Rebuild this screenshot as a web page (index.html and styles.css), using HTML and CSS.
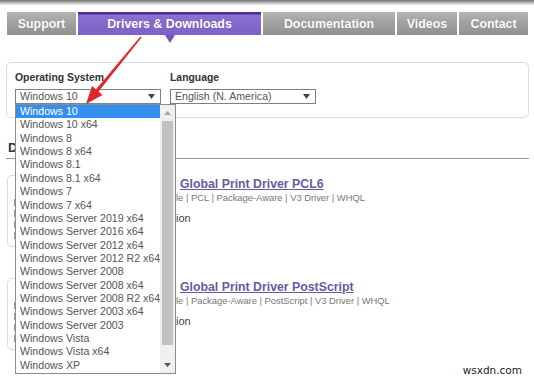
FILE: index.html
```html
<!DOCTYPE html>
<html>
<head>
<meta charset="utf-8">
<link rel="stylesheet" href="styles.css">
</head>
<body>
<div class="topbar"></div>
<nav class="tabs">
  <a class="tab t-support">Support</a>
  <a class="tab active t-drivers">Drivers &amp; Downloads</a>
  <a class="tab t-docs">Documentation</a>
  <a class="tab t-videos">Videos</a>
  <a class="tab t-contact">Contact</a>
</nav>
<section class="filters">
  <div class="field">
    <label class="label">Operating System</label>
    <div class="select-wrap">
      <div class="select focused"><span>Windows 10</span><svg class="caret" viewBox="0 0 7 5"><path d="M0 0H7L3.5 5Z"/></svg></div>
      <div class="dropdown">
        <ul class="options">
          <li class="selected">Windows 10</li>
          <li>Windows 10 x64</li>
          <li>Windows 8</li>
          <li>Windows 8 x64</li>
          <li>Windows 8.1</li>
          <li>Windows 8.1 x64</li>
          <li>Windows 7</li>
          <li>Windows 7 x64</li>
          <li>Windows Server 2019 x64</li>
          <li>Windows Server 2016 x64</li>
          <li>Windows Server 2012 x64</li>
          <li>Windows Server 2012 R2 x64</li>
          <li>Windows Server 2008</li>
          <li>Windows Server 2008 x64</li>
          <li>Windows Server 2008 R2 x64</li>
          <li>Windows Server 2003 x64</li>
          <li>Windows Server 2003</li>
          <li>Windows Vista</li>
          <li>Windows Vista x64</li>
          <li>Windows XP</li>
        </ul>
        <div class="scrollbar">
          <div class="sb-btn"><svg viewBox="0 0 7 4"><path d="M0 4H7L3.5 0Z"/></svg></div>
          <div class="sb-thumb"></div>
          <div class="sb-fill"></div>
          <div class="sb-btn"><svg viewBox="0 0 7 4"><path d="M0 0H7L3.5 4Z"/></svg></div>
        </div>
      </div>
    </div>
  </div>
  <div class="field">
    <label class="label">Language</label>
    <div class="select"><span>English (N. America)</span><svg class="caret" viewBox="0 0 7 5"><path d="M0 0H7L3.5 5Z"/></svg></div>
  </div>
</section>
<h2 class="heading">Drivers</h2>
<div class="results">
  <div class="card">
    <div class="thumb">
      <span class="mark"></span><span class="mark"></span><span class="mark"></span><span class="mark"></span>
    </div>
    <div class="info">
      <a class="title">Global Print Driver PCL6</a>
      <div class="tags">le | PCL | Package-Aware | V3 Driver | WHQL</div>
      <div class="desc">ion</div>
    </div>
  </div>
  <div class="card">
    <div class="thumb">
      <span class="mark"></span><span class="mark"></span><span class="mark"></span><span class="mark"></span>
    </div>
    <div class="info">
      <a class="title">Global Print Driver PostScript</a>
      <div class="tags">le | Package-Aware | PostScript | V3 Driver | WHQL</div>
      <div class="desc">ion</div>
    </div>
  </div>
</div>
<svg class="pointer" viewBox="0 0 534 380">
  <polygon points="141.6,37.4 140.4,36.6 94.6,91 97.4,93" />
  <polygon points="86,104 102.5,95 92,86" />
</svg>
<div class="watermark">wsxdn.com</div>
</body>
</html>
```

FILE: styles.css
```css
* { box-sizing: border-box; }
html, body { margin: 0; padding: 0; }
body {
  font-family: "Liberation Sans", Arial, sans-serif;
  background: #fff;
  width: 534px;
  height: 380px;
  overflow: hidden;
  position: relative;
  color: #444;
}
.topbar {
  height: 6px;
  background: linear-gradient(#707070, #a8a8a8 35%, #e8e8e8 75%, #fff);
}
.tabs {
  display: flex;
  gap: 2px;
  margin: 6px 0 0 7px;
  height: 23px;
}
.tab {
  display: flex;
  align-items: center;
  justify-content: center;
  color: #fff;
  font-weight: bold;
  font-size: 12.4px;
  background: linear-gradient(#b4b4b4, #a2a2a2 45%, #909090);
  text-shadow: 0 0 1px rgba(0,0,0,0.25);
}
.t-support { width: 69px; }
.t-drivers { width: 183px; }
.t-docs { width: 132px; }
.t-videos { width: 60px; }
.t-contact { width: 69px; }
.tab.active {
  position: relative;
  background: linear-gradient(#4b2d8e 0, #4b2d8e 2px, #8a70d2 3px, #7d61c6 100%);
}
.tab.active::after {
  content: "";
  position: absolute;
  left: 50%;
  top: 100%;
  margin-left: -5px;
  border-left: 5px solid transparent;
  border-right: 5px solid transparent;
  border-top: 8px solid #6f55b4;
}
.filters {
  display: flex;
  gap: 9px;
  margin: 27px 5px 0 6px;
  border: 1px solid #dcdcdc;
  border-radius: 5px;
  padding: 9px 8px 13px;
}
.field { width: 146px; }
.label {
  display: block;
  font-size: 10.4px;
  font-weight: bold;
  color: #333;
  line-height: 12px;
  margin-bottom: 5px;
}
.select-wrap { position: relative; }
.select {
  display: flex;
  align-items: center;
  justify-content: space-between;
  width: 146px;
  height: 15px;
  border: 1px solid #7f7f7f;
  padding: 0 5px 0 4px;
  font-size: 10.6px;
  color: #555;
  line-height: 13px;
}
.select.focused { border-color: #7a8396; }
.caret { width: 7px; height: 5px; fill: #444; }
.dropdown {
  position: absolute;
  left: 0;
  top: 100%;
  width: 161px;
  height: 270px;
  border: 1px solid #8c8c8c;
  background: #fff;
  display: flex;
  z-index: 5;
}
.options {
  list-style: none;
  margin: 0;
  padding: 0;
  width: 144px;
}
.options li {
  height: 13.37px;
  line-height: 13.37px;
  padding-left: 4px;
  font-size: 10.6px;
  color: #555;
  white-space: nowrap;
}
.options li.selected {
  background: #3390ee;
  color: #fff;
}
.scrollbar {
  width: 15px;
  background: #f0f0f0;
  display: flex;
  flex-direction: column;
  align-items: center;
}
.sb-btn {
  height: 16px;
  width: 15px;
  display: flex;
  align-items: center;
  justify-content: center;
}
.sb-btn svg { width: 7px; height: 4px; fill: #a3a3a3; }
.sb-btn:last-child svg { fill: #555; }
.sb-thumb {
  width: 11px;
  height: 224px;
  background: #c1c1c1;
}
.sb-fill { flex: 1; }
.heading {
  margin: 22px 5px 0 6px;
  padding: 0 0 3px 2px;
  font-size: 13px;
  line-height: 15px;
  color: #333;
  border-bottom: 1px solid #9a9a9a;
}
.results { margin-top: 16px; }
.card {
  display: flex;
  height: 72px;
  margin-bottom: 31px;
}
.thumb {
  margin-left: 7px;
  width: 160px;
  border: 1px solid #dcdcdc;
  border-radius: 5px;
  padding: 23px 0 0 6px;
  display: flex;
  flex-direction: column;
  gap: 4px;
}
.mark {
  display: block;
  width: 3px;
  height: 7px;
  background: #9c9c9c;
}
.info {
  margin-left: 9px;
  padding-top: 2px;
}
.title {
  display: block;
  padding-left: 4px;
  font-size: 12.3px;
  font-weight: bold;
  line-height: 14px;
  color: #6a5a9e;
  text-decoration: underline;
}
.tags {
  margin-top: 1px;
  font-size: 9.4px;
  line-height: 12px;
  color: #777;
  white-space: nowrap;
}
.desc {
  margin-top: 7px;
  font-size: 11px;
  line-height: 14px;
  color: #444;
}
.pointer {
  position: absolute;
  left: 0;
  top: 0;
  width: 534px;
  height: 380px;
  fill: #e1262b;
  pointer-events: none;
  z-index: 10;
}
.watermark {
  position: absolute;
  right: 12px;
  bottom: 4px;
  font-family: "DejaVu Sans", sans-serif;
  font-size: 10.5px;
  color: #222;
}
```
